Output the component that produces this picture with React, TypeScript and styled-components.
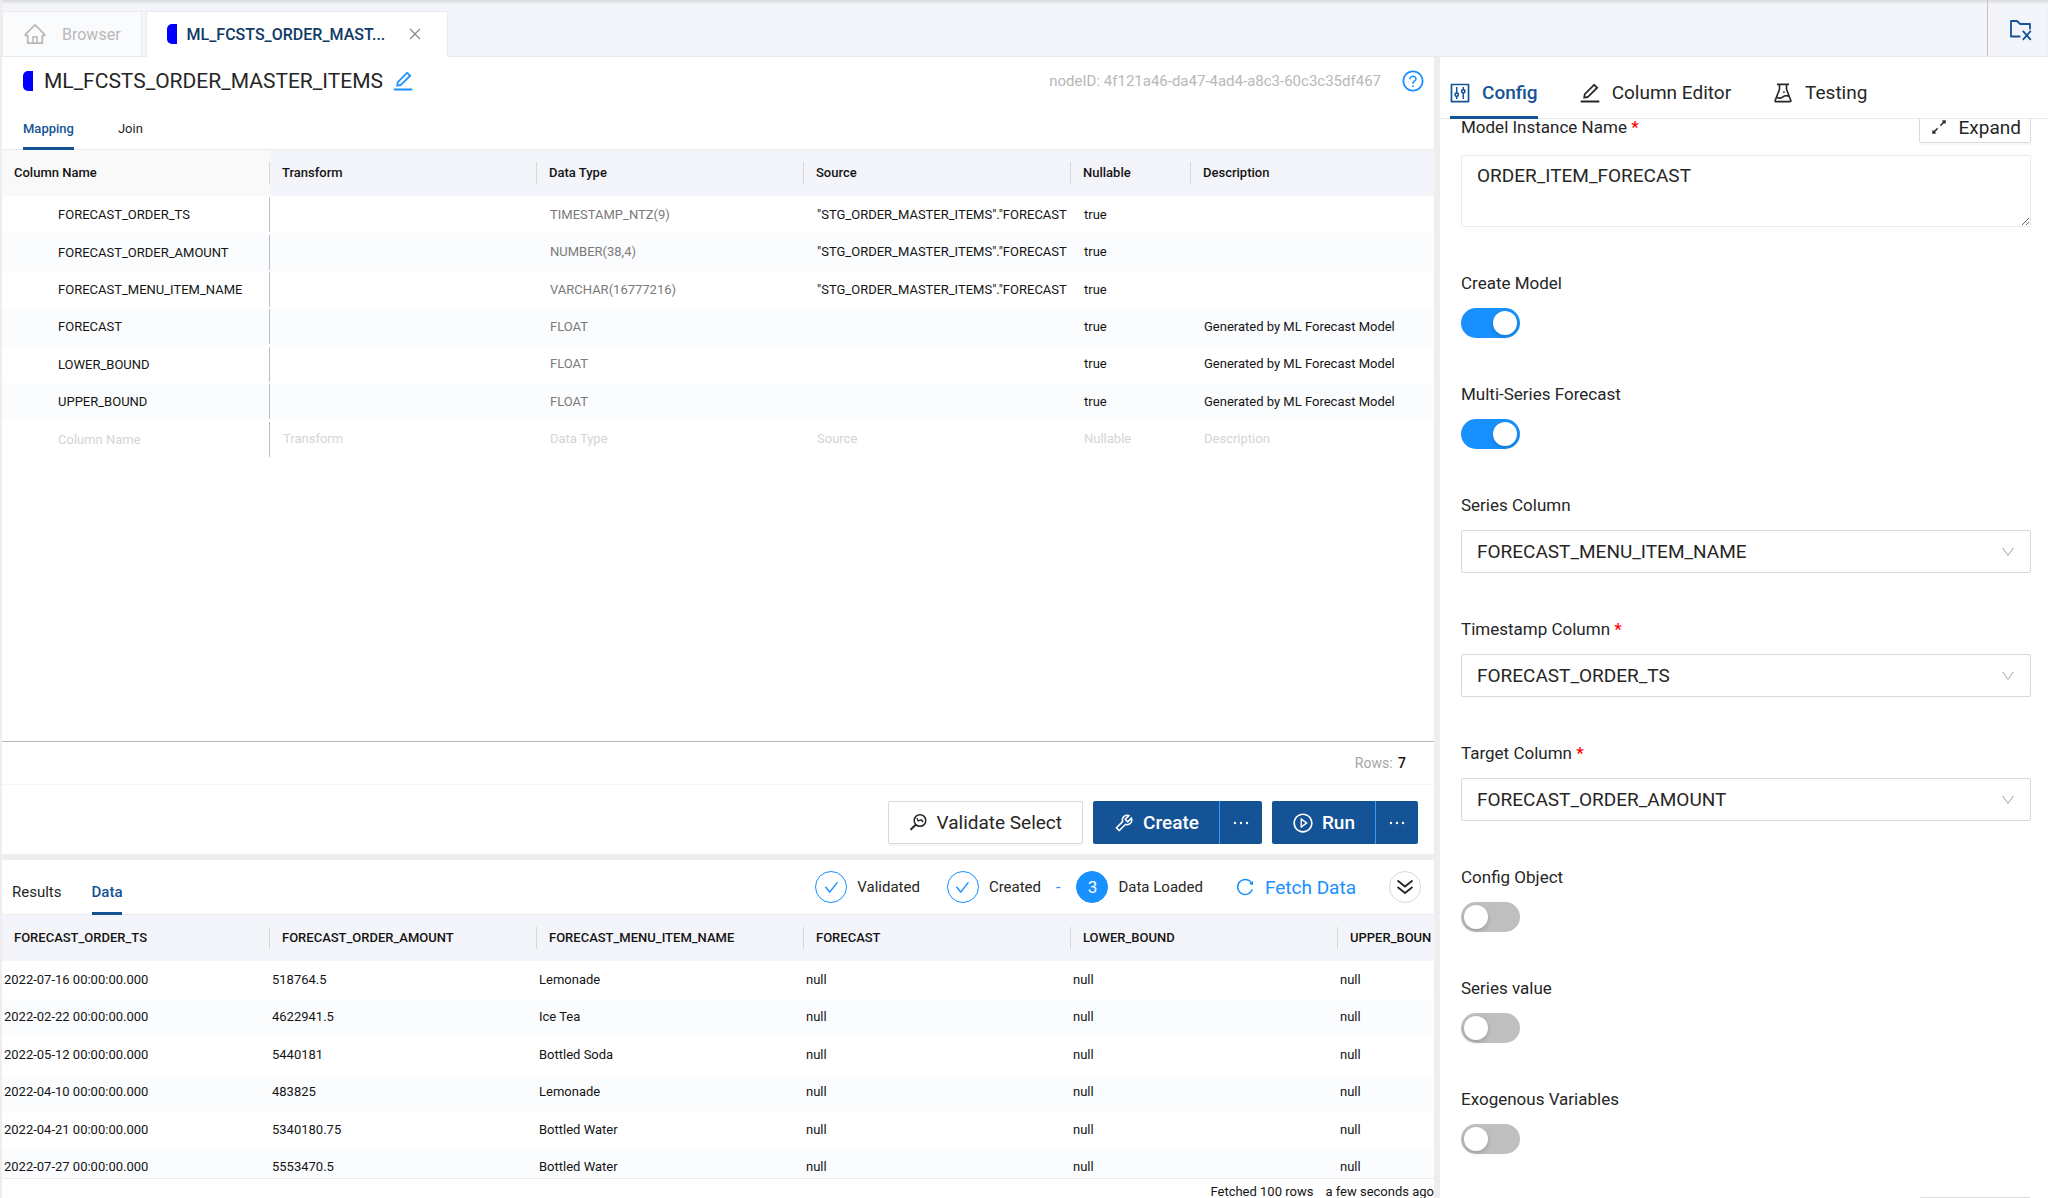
import React, { useLayoutEffect, useRef } from "react";
import styled, { createGlobalStyle, css } from "styled-components";
import {
  AiOutlineArrowsAlt,
  AiOutlineCheck,
  AiOutlineClose,
  AiOutlineControl,
  AiOutlineDown,
  AiOutlineEdit,
  AiOutlineEllipsis,
  AiOutlineExperiment,
  AiOutlineHome,
  AiOutlinePlayCircle,
  AiOutlineQuestionCircle,
  AiOutlineReload,
  AiOutlineTool,
} from "react-icons/ai";

const color = {
  navy: "#145396",
  deep: "#0f3a66",
  blue: "#1890ff",
  text: "#262626",
  black: "#141414",
  muted: "#8c8c8c",
  faint: "#b8b8b8",
  placeholder: "#d4d4d4",
  line: "#ebebeb",
  border: "#d9d9d9",
  split: "#eeeeee",
  bar: "#f4f5fa",
  stripe: "#fbfcfe",
};

const GlobalStyle = createGlobalStyle`
  *, *::before, *::after { box-sizing: border-box; }
  body {
    margin: 0;
    background: #fff;
    color: ${color.text};
    font-family: Roboto, "Liberation Sans", sans-serif;
    font-size: 14px;
  }
  button, input, select, textarea { font: inherit; color: inherit; }
  button { margin: 0; padding: 0; border: 0; background: none; cursor: pointer; white-space: nowrap; }
  svg { display: block; flex: none; }
`;

const Page = styled.div`
  display: flex;
  flex-direction: column;
  height: 100vh;
  border-left: 2px solid ${color.split};
  overflow: hidden;
`;

/* ---- window tabs ---- */

const TabBar = styled.header`
  display: flex;
  align-items: flex-end;
  flex: none;
  height: 57px;
  background: ${color.bar};
  box-shadow: inset 0 3px 3px -1px rgba(0, 0, 0, 0.12), inset 0 -1px 0 ${color.line};
`;

const WindowTab = styled.div<{ $active?: boolean }>`
  display: flex;
  align-items: center;
  height: 46px;
  margin-right: 4px;
  border: 1px solid ${color.line};
  font-size: 16px;
  ${(p) =>
    p.$active
      ? css`
          gap: 10px;
          padding: 0 24px 0 20px;
          background: #fff;
          border-bottom-color: #fff;
          color: ${color.deep};
          font-weight: 500;
        `
      : css`
          gap: 15px;
          padding: 0 20px;
          background: #fafbfd;
          color: ${color.faint};
        `}
`;

const CloseButton = styled.button`
  margin-left: 12px;
  color: ${color.muted};
`;

const BarAction = styled.button`
  display: flex;
  align-items: center;
  justify-content: flex-end;
  align-self: stretch;
  width: 61px;
  margin: 0 0 1px auto;
  padding: 4px 16px 0 0;
  border-left: 1px solid #c4c4c4;
  color: ${color.navy};
`;

const NodeMark = styled.span`
  flex: none;
  width: 10px;
  height: 20px;
  border-radius: 5px 0 0 5px;
  background: #0000ff;
`;

/* ---- panes ---- */

const Workspace = styled.main`
  display: grid;
  grid-template-columns: minmax(0, 179fr) 6px minmax(0, 76fr);
  flex: 1;
  min-height: 0;
`;

const Splitter = styled.div`
  flex: none;
  min-height: 6px;
  background: ${color.split};
`;

const LeftSide = styled.div`
  display: flex;
  flex-direction: column;
  min-height: 0;
`;

const EditorPane = styled.section`
  display: flex;
  flex-direction: column;
  flex: 1;
  min-height: 0;
`;

const ResultPane = styled.section`
  display: flex;
  flex-direction: column;
  flex: none;
  height: 338px;
`;

const TitleRow = styled.div`
  display: flex;
  align-items: center;
  flex: none;
  gap: 8px;
  height: 47px;
  padding: 0 9px 0 21px;
`;

const Title = styled.h1`
  margin: 0 0 0 3px;
  font-size: 21px;
  font-weight: 400;
  line-height: 28px;
`;

const IconButton = styled.button`
  display: flex;
  color: ${color.blue};
`;

const NodeId = styled.span`
  margin: 0 12px 0 auto;
  color: ${color.faint};
  font-size: 15px;
`;

/* ---- text tabs ---- */

const TabList = styled.div<{ $gap: number; $pad: number; $height: number }>`
  display: flex;
  align-items: stretch;
  flex: none;
  gap: ${(p) => p.$gap}px;
  height: ${(p) => p.$height}px;
  padding-left: ${(p) => p.$pad}px;
  border-bottom: 1px solid ${color.line};
`;

const tabSizes = {
  small: css`padding-top: 6px; font-size: 13px;`,
  medium: css`padding-top: 12px; font-size: 15px;`,
  large: css`padding-top: 12px; font-size: 19px;`,
};

const Tab = styled.button<{ $active?: boolean; $size: keyof typeof tabSizes }>`
  display: flex;
  align-items: center;
  gap: 12px;
  margin-bottom: -1px;
  border-bottom: 3px solid ${(p) => (p.$active ? color.navy : "transparent")};
  color: ${(p) => (p.$active ? color.navy : color.text)};
  font-weight: ${(p) => (p.$active ? 500 : 400)};
  ${(p) => tabSizes[p.$size]}

  svg { margin: 0 -2px; }
`;

/* ---- tables ---- */

const TableArea = styled.div<{ $fill?: boolean }>`
  flex: 1;
  min-height: 0;
  overflow: hidden;
  border-bottom: 1px solid ${(p) => (p.$fill ? "#b8b8b8" : color.line)};
`;

const Table = styled.table<{ $height: number }>`
  width: 100%;
  height: ${(p) => p.$height}px;
  border-collapse: separate;
  border-spacing: 0;
  table-layout: fixed;
  color: ${color.black};
  font-size: 13px;
`;

const Col = styled.col<{ $width?: number }>`
  width: ${(p) => (p.$width ? `${p.$width}px` : "auto")};
`;

const HeadCell = styled.th<{ $tint?: boolean }>`
  height: 46px;
  padding: 0;
  overflow: hidden;
  background: ${(p) => (p.$tint ? "#f9f9f9" : color.bar)};
  font-weight: 500;
  text-align: left;
  white-space: nowrap;
`;

const HeadLabel = styled.div<{ $last?: boolean }>`
  padding-left: 12px;
  border-right: ${(p) => (p.$last ? "0" : "1px solid #d6d8dc")};
  line-height: 22px;
`;

const Row = styled.tr`
  &:nth-child(even) { background: ${color.stripe}; }
`;

const Cell = styled.td<{ $pad: number; $tone?: string; $ruled?: boolean }>`
  padding: 0;
  overflow: hidden;
  color: ${(p) => p.$tone ?? "inherit"};
  white-space: nowrap;

  & > div {
    padding-left: ${(p) => p.$pad}px;
    border-right: ${(p) => (p.$ruled ? "1px solid #babfc7" : "0")};
    line-height: ${(p) => (p.$ruled ? 35 : 22)}px;
  }
`;

const RowCount = styled.div`
  flex: none;
  padding: 0 28px;
  border-bottom: 1px solid #f5f5f5;
  color: #a6a6a6;
  font-size: 14px;
  line-height: 42px;
  text-align: right;

  b { margin-left: 2px; color: ${color.black}; font-weight: 500; }
`;

/* ---- actions ---- */

const Actions = styled.div`
  display: flex;
  justify-content: flex-end;
  flex: none;
  gap: 10px;
  padding: 16px 16px 10px;
`;

const Button = styled.button<{ $compact?: boolean }>`
  display: flex;
  align-items: center;
  gap: 10px;
  height: ${(p) => (p.$compact ? 32 : 43)}px;
  padding: 0 ${(p) => (p.$compact ? 9 : 20)}px;
  border: 1px solid ${color.border};
  border-radius: 2px;
  background: #fff;
  box-shadow: 0 2px 0 rgba(0, 0, 0, 0.03);
  font-size: 19px;
`;

const SplitButton = styled.div`
  display: flex;
  border-radius: 2px;
  overflow: hidden;

  ${Button} {
    gap: 8px;
    border: 0;
    border-radius: 0;
    background: ${color.navy};
    color: #fff;
    font-weight: 500;
  }
  ${Button} + ${Button} {
    padding: 0 10px;
    border-left: 1px solid #3a9cf5;
  }
`;

/* ---- result toolbar ---- */

const ResultBar = styled.div`
  display: flex;
  justify-content: space-between;
  flex: none;
  height: 55px;
  border-bottom: 1px solid ${color.line};
`;

const Steps = styled.div`
  display: flex;
  align-items: center;
  padding-right: 13px;
`;

const Step = styled.div`
  display: flex;
  align-items: center;
  gap: 10px;
  margin-right: 27px;
  font-size: 15px;
`;

const StepDot = styled.span<{ $solid?: boolean }>`
  display: flex;
  align-items: center;
  justify-content: center;
  width: 32px;
  height: 32px;
  border: 1px solid ${color.blue};
  border-radius: 50%;
  background: ${(p) => (p.$solid ? color.blue : "#fff")};
  color: ${(p) => (p.$solid ? "#fff" : color.blue)};
  font-size: 17px;
`;

const Dash = styled.span`
  margin: 0 16px 0 -12px;
  color: ${color.blue};
  font-size: 16px;
`;

const FetchButton = styled.button`
  display: flex;
  align-items: center;
  gap: 10px;
  margin: 0 33px 0 5px;
  color: ${color.blue};
  font-size: 19px;
`;

const RoundButton = styled.button`
  display: flex;
  align-items: center;
  justify-content: center;
  width: 32px;
  height: 32px;
  border: 1px solid ${color.border};
  border-radius: 50%;
  background: #fff;
`;

const FetchStatus = styled.footer`
  display: flex;
  justify-content: flex-end;
  flex: none;
  gap: 12px;
  height: 19px;
  overflow: hidden;
  color: ${color.black};
  font-size: 13px;
  line-height: 26px;
  white-space: nowrap;
`;

/* ---- config panel ---- */

const ConfigPane = styled.aside`
  display: flex;
  flex-direction: column;
  min-height: 0;
`;

const ConfigForm = styled.form`
  display: flex;
  flex-direction: column;
  flex: 1;
  gap: 43px;
  min-height: 0;
  padding: 24px 17px 24px 21px;
  overflow-y: auto;
  scrollbar-width: none;
`;

const Field = styled.div`
  display: flex;
  flex-direction: column;
  flex: none;
  gap: 12px;
`;

const FieldHead = styled.div`
  display: flex;
  align-items: center;

  ${Button} { margin-left: auto; }
`;

const Label = styled.label`
  font-size: 17px;
  line-height: 26px;

  em { color: #ff0000; font-style: normal; font-weight: 500; }
`;

const TextArea = styled.textarea`
  display: block;
  width: 100%;
  height: 72px;
  padding: 6px 15px;
  border: 1px solid ${color.line};
  border-radius: 2px;
  background: #fff;
  font-size: 19px;
  line-height: 28px;
  outline: 0;
  resize: vertical;
`;

const SelectBox = styled.div`
  position: relative;

  select {
    width: 100%;
    height: 43px;
    padding: 0 40px 1px 15px;
    appearance: none;
    border: 1px solid ${color.border};
    border-radius: 2px;
    background: #fff;
    font-size: 19px;
    outline: 0;
  }
  svg {
    position: absolute;
    top: 14px;
    right: 15px;
    color: #bfbfbf;
    pointer-events: none;
  }
`;

const Switch = styled.input`
  appearance: none;
  width: 59px;
  height: 30px;
  margin: 0;
  padding: 3px;
  border-radius: 15px;
  background: #bfbfbf;

  &::before {
    content: "";
    display: block;
    width: 24px;
    height: 24px;
    border-radius: 50%;
    background: #fff;
    box-shadow: 0 2px 4px rgba(0, 35, 11, 0.2);
  }
  &:checked { background: ${color.blue}; }
  &:checked::before { margin-left: auto; }
`;

/* ---- custom icons ---- */

const FolderXIcon = () => (
  <svg width="24" height="24" viewBox="0 0 24 24" fill="none" stroke="currentColor" strokeWidth="1.8">
    <path d="M12.500 18.500H3V3h6l3.200 3H22v5.500" strokeLinejoin="round" />
    <path d="M14.800 12.800l8 9M22.800 12.800l-8 9" />
  </svg>
);

const CodeSearchIcon = () => (
  <svg width="18" height="20" viewBox="0 0 18 20" fill="none" stroke="currentColor" strokeWidth="1.500">
    <circle cx="11" cy="7.500" r="5.800" />
    <path d="M6.800 11.800L1.500 16.800" strokeWidth="1.900" />
    <path d="M8 5.200l1.200 2.600 3.400-1 1.400 2.400" strokeWidth="1.400" />
  </svg>
);

const DoubleDownIcon = () => (
  <svg width="18" height="18" viewBox="0 0 18 18" fill="none" stroke="currentColor" strokeWidth="1.800">
    <path d="M1.500 2.500L9 8.500l7.500-6M1.500 9L9 15l7.500-6" />
  </svg>
);

/* ---- data ---- */

const mappingHeads = ["Column Name", "Transform", "Data Type", "Source", "Nullable", "Description"];
const source = '"STG_ORDER_MASTER_ITEMS"."FORECAST';
const generated = "Generated by ML Forecast Model";

const mappingRows = [
  ["FORECAST_ORDER_TS", "", "TIMESTAMP_NTZ(9)", source, "true", ""],
  ["FORECAST_ORDER_AMOUNT", "", "NUMBER(38,4)", source, "true", ""],
  ["FORECAST_MENU_ITEM_NAME", "", "VARCHAR(16777216)", source, "true", ""],
  ["FORECAST", "", "FLOAT", "", "true", generated],
  ["LOWER_BOUND", "", "FLOAT", "", "true", generated],
  ["UPPER_BOUND", "", "FLOAT", "", "true", generated],
];

const dataHeads = [
  "FORECAST_ORDER_TS",
  "FORECAST_ORDER_AMOUNT",
  "FORECAST_MENU_ITEM_NAME",
  "FORECAST",
  "LOWER_BOUND",
  "UPPER_BOUN",
];

const dataRows = [
  ["2022-07-16", "518764.5", "Lemonade"],
  ["2022-02-22", "4622941.5", "Ice Tea"],
  ["2022-05-12", "5440181", "Bottled Soda"],
  ["2022-04-10", "483825", "Lemonade"],
  ["2022-04-21", "5340180.75", "Bottled Water"],
  ["2022-07-27", "5553470.5", "Bottled Water"],
].map(([day, amount, item]) => [`${day} 00:00:00.000`, amount, item, "null", "null", "null"]);

const Head = ({ labels, tintFirst }: { labels: string[]; tintFirst?: boolean }) => (
  <thead>
    <tr>
      {labels.map((label, i) => (
        <HeadCell key={label} $tint={tintFirst && i === 0}>
          <HeadLabel $last={i === labels.length - 1}>{label}</HeadLabel>
        </HeadCell>
      ))}
    </tr>
  </thead>
);

const MappingTable = () => (
  <Table $height={308}>
    <colgroup>
      {[268, 267, 267, 267, 120, undefined].map((width, i) => (
        <Col key={i} $width={width} />
      ))}
    </colgroup>
    <Head labels={mappingHeads} tintFirst />
    <tbody>
      {[...mappingRows, mappingHeads].map((row, r) => (
        <Row key={r}>
          {row.map((value, c) => (
            <Cell
              key={c}
              $pad={c === 0 ? 56 : 13}
              $ruled={c === 0}
              $tone={row === mappingHeads ? color.placeholder : c === 2 ? "#7a7a7a" : undefined}
            >
              <div>{value}</div>
            </Cell>
          ))}
        </Row>
      ))}
    </tbody>
  </Table>
);

const DataTable = () => (
  <Table $height={271}>
    <colgroup>
      {[268, 267, 267, 267, 267, undefined].map((width, i) => (
        <Col key={i} $width={width} />
      ))}
    </colgroup>
    <Head labels={dataHeads} />
    <tbody>
      {dataRows.map((row, r) => (
        <Row key={r}>
          {row.map((value, c) => (
            <Cell key={c} $pad={2}>
              <div>{value}</div>
            </Cell>
          ))}
        </Row>
      ))}
    </tbody>
  </Table>
);

const ExpandButton = () => (
  <Button type="button" $compact>
    <AiOutlineArrowsAlt size={20} />
    Expand
  </Button>
);

const SwitchField = ({ id, label, on }: { id: string; label: string; on?: boolean }) => (
  <Field>
    <Label htmlFor={id}>{label}</Label>
    <Switch id={id} type="checkbox" role="switch" defaultChecked={on} />
  </Field>
);

const SelectField = ({ id, label, value, required }: { id: string; label: string; value: string; required?: boolean }) => (
  <Field>
    <Label htmlFor={id}>
      {label} {required && <em>*</em>}
    </Label>
    <SelectBox>
      <select id={id} defaultValue={value}>
        <option>{value}</option>
      </select>
      <AiOutlineDown size={16} />
    </SelectBox>
  </Field>
);

export default function App() {
  const form = useRef<HTMLFormElement>(null);

  // The form opens scrolled just past the top edge of its first field.
  useLayoutEffect(() => {
    if (form.current) form.current.scrollTop = 32;
  }, []);

  return (
    <Page>
      <GlobalStyle />
      <TabBar>
        <WindowTab>
          <AiOutlineHome size={24} />
          Browser
        </WindowTab>
        <WindowTab $active>
          <NodeMark />
          ML_FCSTS_ORDER_MAST...
          <CloseButton aria-label="Close tab">
            <AiOutlineClose size={16} />
          </CloseButton>
        </WindowTab>
        <BarAction aria-label="Close all tabs">
          <FolderXIcon />
        </BarAction>
      </TabBar>

      <Workspace>
        <LeftSide>
          <EditorPane>
            <TitleRow>
              <NodeMark />
              <Title>ML_FCSTS_ORDER_MASTER_ITEMS</Title>
              <IconButton aria-label="Rename node">
                <AiOutlineEdit size={24} />
              </IconButton>
              <NodeId>nodeID: 4f121a46-da47-4ad4-a8c3-60c3c35df467</NodeId>
              <IconButton aria-label="Help">
                <AiOutlineQuestionCircle size={24} />
              </IconButton>
            </TitleRow>
            <TabList $gap={44} $pad={21} $height={46}>
              <Tab $size="small" $active>Mapping</Tab>
              <Tab $size="small">Join</Tab>
            </TabList>
            <TableArea $fill>
              <MappingTable />
            </TableArea>
            <RowCount>
              Rows: <b>7</b>
            </RowCount>
            <Actions>
              <Button>
                <CodeSearchIcon />
                Validate Select
              </Button>
              <SplitButton>
                <Button>
                  <AiOutlineTool size={22} />
                  Create
                </Button>
                <Button aria-label="More create options">
                  <AiOutlineEllipsis size={22} />
                </Button>
              </SplitButton>
              <SplitButton>
                <Button>
                  <AiOutlinePlayCircle size={22} />
                  Run
                </Button>
                <Button aria-label="More run options">
                  <AiOutlineEllipsis size={22} />
                </Button>
              </SplitButton>
            </Actions>
          </EditorPane>

          <Splitter />

          <ResultPane>
            <ResultBar>
              <TabList $gap={30} $pad={10} $height={55}>
                <Tab $size="medium">Results</Tab>
                <Tab $size="medium" $active>Data</Tab>
              </TabList>
              <Steps>
                <Step>
                  <StepDot>
                    <AiOutlineCheck size={17} />
                  </StepDot>
                  Validated
                </Step>
                <Step>
                  <StepDot>
                    <AiOutlineCheck size={17} />
                  </StepDot>
                  Created
                </Step>
                <Dash>-</Dash>
                <Step>
                  <StepDot $solid>3</StepDot>
                  Data Loaded
                </Step>
                <FetchButton>
                  <AiOutlineReload size={20} />
                  Fetch Data
                </FetchButton>
                <RoundButton aria-label="Collapse results">
                  <DoubleDownIcon />
                </RoundButton>
              </Steps>
            </ResultBar>
            <TableArea>
              <DataTable />
            </TableArea>
            <FetchStatus>
              <span>Fetched 100 rows</span>
              <span>a few seconds ago</span>
            </FetchStatus>
          </ResultPane>
        </LeftSide>

        <Splitter />

        <ConfigPane>
          <TabList $gap={42} $pad={10} $height={62}>
            <Tab $size="large" $active>
              <AiOutlineControl size={24} />
              Config
            </Tab>
            <Tab $size="large">
              <AiOutlineEdit size={24} />
              Column Editor
            </Tab>
            <Tab $size="large">
              <AiOutlineExperiment size={24} />
              Testing
            </Tab>
          </TabList>
          <ConfigForm ref={form}>
            <Field>
              <FieldHead>
                <Label htmlFor="model-name">
                  Model Instance Name <em>*</em>
                </Label>
                <ExpandButton />
              </FieldHead>
              <TextArea id="model-name" defaultValue="ORDER_ITEM_FORECAST" />
            </Field>
            <SwitchField id="create-model" label="Create Model" on />
            <SwitchField id="multi-series" label="Multi-Series Forecast" on />
            <SelectField id="series-column" label="Series Column" value="FORECAST_MENU_ITEM_NAME" />
            <SelectField id="timestamp-column" label="Timestamp Column" value="FORECAST_ORDER_TS" required />
            <SelectField id="target-column" label="Target Column" value="FORECAST_ORDER_AMOUNT" required />
            <SwitchField id="config-object" label="Config Object" />
            <SwitchField id="series-value" label="Series value" />
            <SwitchField id="exogenous" label="Exogenous Variables" />
            <Field>
              <FieldHead>
                <ExpandButton />
              </FieldHead>
            </Field>
          </ConfigForm>
        </ConfigPane>
      </Workspace>
    </Page>
  );
}
